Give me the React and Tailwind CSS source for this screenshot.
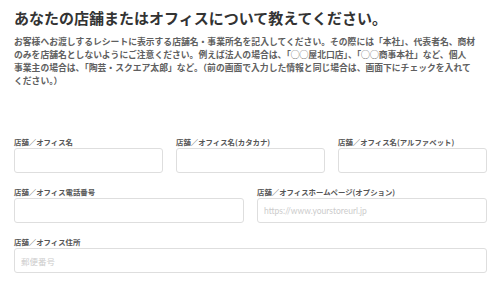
export default function App() {
  const label = "block text-[7.4px] leading-[12px] font-bold text-[#555]";
  const input =
    "block w-full h-[25px] rounded-[3px] border border-[#dedede] bg-white px-[6px] text-[8.5px] text-[#333] outline-none placeholder:text-[#cccccc]";
  return (
    <div className="w-[500px] h-[285px] overflow-hidden bg-white pl-[14px] pr-[13px] pt-[8px] font-['Noto_Sans_CJK_JP','Noto_Sans',sans-serif]">
      <h1 className="text-[15px] leading-[20px] font-bold text-[#333] whitespace-nowrap">
        あなたの店舗またはオフィスについて教えてください。
      </h1>
      <p className="mt-[6.5px] text-[8.8px] leading-[13px] font-bold text-[#5f5f5f] whitespace-nowrap">
        お客様へお渡しするレシートに表示する店舗名・事業所名を記入してください。その際には「本社」、代表者名、商材
        <br />
        のみを店舗名としないようにご注意ください。例えば法人の場合は、「◯◯屋北口店」、「◯◯商事本社」など、個人
        <br />
        事業主の場合は、「陶芸・スクエア太郎」など。（前の画面で入力した情報と同じ場合は、画面下にチェックを入れて
        <br />
        ください。）
      </p>
      <div className="mt-[49.5px] flex flex-col gap-[13px]">
        <div className="grid grid-cols-3 gap-x-[13px]">
          <div>
            <label className={label}>店舗／オフィス名</label>
            <input className={input} />
          </div>
          <div>
            <label className={label}>店舗／オフィス名(カタカナ)</label>
            <input className={input} />
          </div>
          <div>
            <label className={label}>店舗／オフィス名(アルファベット)</label>
            <input className={input} />
          </div>
        </div>
        <div className="grid grid-cols-2 gap-x-[13px]">
          <div>
            <label className={label}>店舗／オフィス電話番号</label>
            <input className={input} />
          </div>
          <div>
            <label className={label}>店舗／オフィスホームページ(オプション)</label>
            <input
              className={input + " font-['Lato',sans-serif]"}
              placeholder="https://www.yourstoreurl.jp"
            />
          </div>
        </div>
        <div>
          <label className={label}>店舗／オフィス住所</label>
          <input className={input} placeholder="郵便番号" />
        </div>
      </div>
    </div>
  );
}
